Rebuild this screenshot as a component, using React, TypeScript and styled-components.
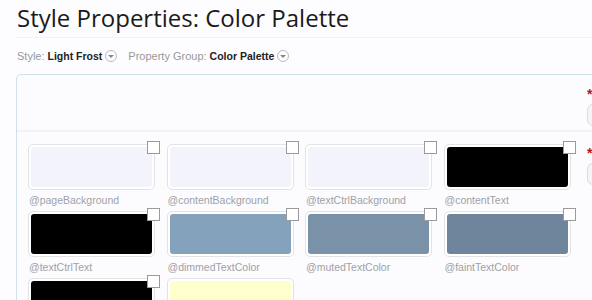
import React from "react";
import styled, { createGlobalStyle } from "styled-components";

const Global = createGlobalStyle`
  html, body { margin: 0; padding: 0; background: #fdfdff; }
  body { font-family: "Liberation Sans", Arial, sans-serif; }
`;

const Page = styled.div`
  width: 592px;
  height: 300px;
  overflow: hidden;
  padding-left: 16px;
  box-sizing: border-box;
`;

const Title = styled.h1`
  margin: 0;
  padding: 5px 0 6px 1px;
  font-family: "Open Sans", sans-serif;
  font-weight: 400;
  font-size: 24px;
  line-height: 26px;
  color: #1a1a1a;
  border-bottom: 1px solid #eef3f7;
  white-space: nowrap;
`;

const Crumbs = styled.div`
  display: flex;
  align-items: center;
  gap: 11px;
  padding: 10px 0 0 1px;
  height: 16px;
  font-size: 11px;
  color: #999;
  white-space: nowrap;
`;

const Crumb = styled.span`
  display: inline-flex;
  align-items: center;
  gap: 3px;
`;

const CrumbValue = styled.b`
  color: #222;
  font-weight: 700;
  font-size: 10.5px;
`;

const Caret = styled.span`
  width: 12px;
  height: 12px;
  border: 1px solid #bbb;
  border-radius: 50%;
  display: inline-flex;
  align-items: center;
  justify-content: center;
  box-sizing: border-box;
  &::after {
    content: "";
    border-left: 3px solid transparent;
    border-right: 3px solid transparent;
    border-top: 3px solid #888;
    margin-top: 1px;
  }
`;

const Panel = styled.div`
  margin-top: 10px;
  width: 700px;
  border: 1px solid #cfe0e8;
  border-radius: 5px;
  background: #fcfcfe;
`;

const Section = styled.div<{ $top?: boolean }>`
  display: flex;
  ${(p) => (p.$top ? "height: 55px; border-bottom: 2px solid #f1f2f6;" : "padding-top: 12px;")}
`;

const Main = styled.div`
  width: 570px;
  flex: none;
`;

const Side = styled.div<{ $top?: boolean }>`
  display: flex;
  flex-direction: column;
  gap: 4px;
  padding-top: ${(p) => (p.$top ? "13px" : "3px")};
`;

const Req = styled.span`
  color: #c1121c;
  font-size: 14px;
  font-weight: 700;
  line-height: 12px;
  height: 12px;
`;

const SideButton = styled.div`
  width: 40px;
  height: 20px;
  border: 1px solid #dcdcdc;
  border-radius: 6px;
  background: #f4f4f4;
`;

const Grid = styled.div`
  display: grid;
  grid-template-columns: repeat(4, 127px);
  column-gap: 11.5px;
  row-gap: 3px;
  padding-left: 11px;
`;

const Cell = styled.div`
  display: flex;
  flex-direction: column;
  position: relative;
`;

const Swatch = styled.div`
  height: 46px;
  border: 1px solid #e3e3e6;
  border-radius: 5px;
  padding: 2px;
  box-sizing: border-box;
  background: #fff;
`;

const Fill = styled.div<{ $c: string }>`
  height: 100%;
  border-radius: 3px;
  background: ${(p) => p.$c};
`;

const Check = styled.span`
  position: absolute;
  top: -3px;
  right: -5px;
  width: 13px;
  height: 13px;
  border: 1px solid #9a9a9a;
  background: #fff;
  box-sizing: border-box;
`;

const Label = styled.div`
  font-size: 10.5px;
  color: #a0a0a8;
  line-height: 14px;
  padding: 3px 0 1px 1px;
  height: 14px;
  white-space: nowrap;
`;

const items = [
  ["@pageBackground", "#f3f4fb"],
  ["@contentBackground", "#f3f4fb"],
  ["@textCtrlBackground", "#f3f4fb"],
  ["@contentText", "#000000"],
  ["@textCtrlText", "#000000"],
  ["@dimmedTextColor", "#84a2bb"],
  ["@mutedTextColor", "#7a92a8"],
  ["@faintTextColor", "#6f859b"],
  ["@primaryText", "#000000"],
  ["@highlight", "#ffffcc"],
];

export default function App() {
  return (
    <Page>
      <Global />
      <Title>Style Properties: Color Palette</Title>
      <Crumbs>
        <Crumb>
          Style: <CrumbValue>Light Frost</CrumbValue>
          <Caret />
        </Crumb>
        <Crumb>
          Property Group: <CrumbValue>Color Palette</CrumbValue>
          <Caret />
        </Crumb>
      </Crumbs>
      <Panel>
        <Section $top>
          <Main />
          <Side $top>
            <Req>*</Req>
            <SideButton />
          </Side>
        </Section>
        <Section>
          <Main>
            <Grid>
              {items.map(([name, color], i) => (
                <Cell key={i}>
                  <Swatch>
                    <Fill $c={color} />
                  </Swatch>
                  {i !== 9 && <Check />}
                  <Label>{name}</Label>
                </Cell>
              ))}
            </Grid>
          </Main>
          <Side>
            <Req>*</Req>
            <SideButton />
          </Side>
        </Section>
      </Panel>
    </Page>
  );
}
